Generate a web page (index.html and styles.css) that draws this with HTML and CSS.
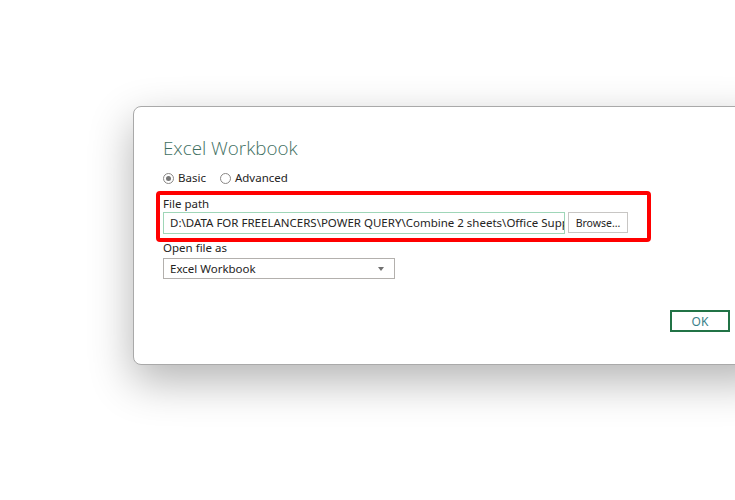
FILE: index.html
```html
<!DOCTYPE html>
<html lang="en">
<head>
    <meta charset="UTF-8">
    <meta name="viewport" content="width=device-width, initial-scale=1.0">
    <title>Excel Workbook</title>
    <link rel="stylesheet" href="styles.css">
</head>
<body>
    <div class="dialog">
        <h1 class="title">Excel Workbook</h1>
        <div class="radios">
            <label class="radio"><span class="dot checked"></span>Basic</label>
            <label class="radio"><span class="dot"></span>Advanced</label>
        </div>
        <div class="filepath">
            <div class="label">File path</div>
            <div class="pathrow">
                <div class="pathinput">D:\DATA FOR FREELANCERS\POWER QUERY\Combine 2 sheets\Office Supplies.xlsx</div>
                <button class="browse">Browse...</button>
            </div>
        </div>
        <div class="label openas">Open file as</div>
        <div class="select">
            <span>Excel Workbook</span>
            <span class="arrow"></span>
        </div>
        <div class="footer">
            <button class="ok">OK</button>
        </div>
    </div>
</body>
</html>
```

FILE: styles.css
```css
html, body {
    margin: 0;
    padding: 0;
    background: #ffffff;
    overflow: hidden;
    height: 500px;
}
body {
    font-family: "Noto Sans", "Open Sans", sans-serif;
    font-size: 11.5px;
    color: #252423;
}
.dialog {
    margin-top: 106px;
    margin-left: 133px;
    width: 640px;
    height: 259px;
    box-sizing: border-box;
    padding: 27px 29px 0 29px;
    background: #ffffff;
    border: 1px solid #a9a9a9;
    border-radius: 8px;
    box-shadow: 0 16px 44px rgba(0, 0, 0, 0.3);
}
.title {
    margin: 0;
    font-family: "Open Sans", "Noto Sans", sans-serif;
    font-size: 18.8px;
    font-weight: 300;
    line-height: 28px;
    color: #3f6f62;
}
.radios {
    display: flex;
    gap: 14px;
    margin-top: 8px;
    height: 16px;
    align-items: center;
}
.radio {
    display: flex;
    align-items: center;
    gap: 4px;
    line-height: 16px;
}
.dot {
    width: 9px;
    height: 9px;
    border: 1px solid #8a8886;
    border-radius: 50%;
    display: inline-block;
    position: relative;
}
.dot.checked::after {
    content: "";
    position: absolute;
    left: 2px;
    top: 2px;
    width: 5px;
    height: 5px;
    border-radius: 50%;
    background: #767676;
}
.filepath {
    position: relative;
    margin-top: 10px;
}
.filepath::after {
    content: "";
    position: absolute;
    left: -7px;
    top: -5px;
    width: 495px;
    height: 51px;
    box-sizing: border-box;
    border: 4px solid #ff0000;
    border-radius: 4px;
}
.label {
    line-height: 16px;
    height: 16px;
}
.pathrow {
    display: flex;
    gap: 3px;
    margin-top: 0;
}
.pathinput {
    width: 402px;
    height: 22px;
    box-sizing: border-box;
    border: 1px solid #9fd6b8;
    padding: 0 6px;
    line-height: 20px;
    white-space: nowrap;
    overflow: hidden;
}
.browse {
    width: 60px;
    height: 21px;
    box-sizing: border-box;
    border: 1px solid #c8c6c4;
    background: #ffffff;
    font-family: inherit;
    font-size: 10.5px;
    color: #252423;
    padding: 0;
}
.openas {
    margin-top: 6px;
}
.select {
    margin-top: 2px;
    width: 232px;
    height: 21px;
    box-sizing: border-box;
    border: 1px solid #b3b0ad;
    padding: 0 6px;
    display: flex;
    align-items: center;
    justify-content: space-between;
}
.arrow {
    width: 0;
    height: 0;
    border-left: 3px solid transparent;
    border-right: 3px solid transparent;
    border-top: 4px solid #707070;
    margin-right: 4px;
}
.footer {
    display: flex;
    margin-top: 31px;
    padding-left: 507px;
}
.ok {
    width: 60px;
    height: 22px;
    box-sizing: border-box;
    border: 2px solid #217346;
    background: #ffffff;
    font-family: inherit;
    font-size: 12px;
    color: #3b7f8a;
    padding: 0;
}
```
